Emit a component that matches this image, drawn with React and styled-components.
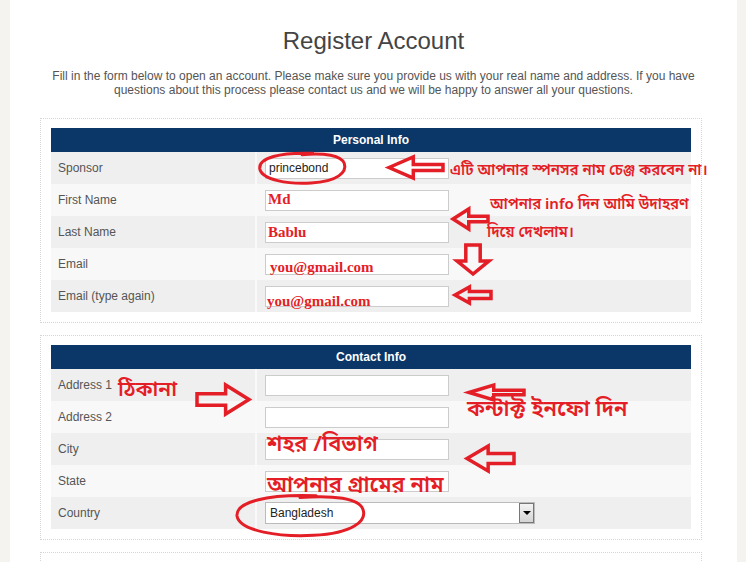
import React from 'react';
import styled, { createGlobalStyle } from 'styled-components';

const GlobalStyle = createGlobalStyle`
    html, body {
        margin: 0;
        padding: 0;
        background: #f4f3f0;
    }
`;

const RED = '#e41e26';
const BN = `"Noto Sans Bengali", "Lohit Bengali", "Noto Serif Bengali", "Vrinda", "Noto Sans", sans-serif`;

const Root = styled.div`
    position: relative;
    width: 746px;
    height: 562px;
    overflow: hidden;
    padding: 0 9px 0 10px;
    box-sizing: border-box;
    font-family: 'Liberation Sans', Arial, sans-serif;
`;

const Sheet = styled.div`
    background: #fff;
    height: 100%;
    padding-top: 26px;
    box-sizing: border-box;
`;

const Title = styled.h1`
    margin: 0;
    font-size: 24px;
    font-weight: normal;
    color: #444;
    text-align: center;
    line-height: 30px;
`;

const Intro = styled.p`
    width: 672px;
    margin: 13px auto 21px;
    font-size: 12px;
    line-height: 14px;
    color: #555;
    text-align: center;
`;

const Box = styled.div`
    margin: 0 35px 12px 30px;
    border: 1px dotted #d6d6d6;
    padding: 9px 10px 10px;
`;

const BoxHead = styled.div`
    height: 24px;
    line-height: 24px;
    background: #0b3768;
    color: #fff;
    font-weight: bold;
    font-size: 12px;
    text-align: center;
`;

const Row = styled.div`
    display: flex;
    height: 32px;
    background: ${(p) => (p.$odd ? '#f8f8f8' : '#efefef')};
`;

const Label = styled.div`
    width: 197px;
    padding-left: 7px;
    border-right: 2px solid #f9f9f9;
    display: flex;
    align-items: center;
    font-size: 12px;
    color: #555;
`;

const Cell = styled.div`
    flex: 1;
    display: flex;
    align-items: center;
    padding-left: 8px;
`;

const Input = styled.div`
    width: 184px;
    height: 21px;
    box-sizing: border-box;
    border: 1px solid #ccc;
    background: #fff;
    font-size: 12px;
    color: #222;
    line-height: 19px;
    padding-left: 3px;
`;

const Select = styled.div`
    width: 270px;
    height: 22px;
    box-sizing: border-box;
    border: 1px solid #bbb;
    background: #fff;
    display: flex;
    align-items: center;
    font-size: 12px;
    color: #222;
    padding-left: 4px;
`;

const SelectText = styled.span`
    flex: 1;
`;

const DropBtn = styled.div`
    width: 15px;
    height: 20px;
    box-sizing: border-box;
    border: 1px solid #777;
    background: linear-gradient(#f4f4f4, #d4d4d4);
    display: flex;
    align-items: center;
    justify-content: center;
    &::after {
        content: '';
        border-left: 4px solid transparent;
        border-right: 4px solid transparent;
        border-top: 4px solid #000;
    }
`;

const Note = styled.div`
    position: absolute;
    left: ${(p) => p.$x}px;
    top: ${(p) => p.$y}px;
    font-family: ${BN};
    font-size: ${(p) => p.$size || 15}px;
    font-weight: 600;
    color: ${RED};
    white-space: nowrap;
    line-height: 1;
`;

const Value = styled.div`
    position: absolute;
    left: ${(p) => p.$x}px;
    top: ${(p) => p.$y}px;
    font-family: 'Liberation Serif', 'Times New Roman', serif;
    font-weight: bold;
    font-size: 15px;
    color: ${RED};
    line-height: 1;
    white-space: nowrap;
`;

const Mark = styled.svg`
    position: absolute;
    left: ${(p) => p.$x}px;
    top: ${(p) => p.$y}px;
    overflow: visible;
`;

const Arrow = ({ x, y, w, h, dir = 'left', sw = 3.5, head = 0.45, shaft = 0.28 }) => {
    let pts;
    if (dir === 'left' || dir === 'right') {
        const hw = w * head;
        const t = h * (0.5 - shaft / 2);
        const b = h * (0.5 + shaft / 2);
        pts = [
            [0, h / 2],
            [hw, 0],
            [hw, t],
            [w, t],
            [w, b],
            [hw, b],
            [hw, h],
        ];
        if (dir === 'right') pts = pts.map(([px, py]) => [w - px, py]);
    } else {
        const hh = h * head;
        const l = w * (0.5 - shaft / 2);
        const r = w * (0.5 + shaft / 2);
        pts = [
            [w / 2, h],
            [0, h - hh],
            [l, h - hh],
            [l, 0],
            [r, 0],
            [r, h - hh],
            [w, h - hh],
        ];
    }
    return (
        <Mark $x={x} $y={y} width={w} height={h}>
            <polygon
                points={pts.map((p) => p.join(',')).join(' ')}
                fill="none"
                stroke={RED}
                strokeWidth={sw}
                strokeLinejoin="miter"
            />
        </Mark>
    );
};

const Loop = ({ x, y, w, h }) => (
    <Mark $x={x} $y={y} width={w} height={h}>
        <path
            d={`M ${w * 0.62} ${h * 0.04}
                C ${w * 0.25} ${h * 0.0}, ${w * 0.02} ${h * 0.18}, ${w * 0.03} ${h * 0.5}
                C ${w * 0.05} ${h * 0.85}, ${w * 0.35} ${h * 0.98}, ${w * 0.6} ${h * 0.94}
                C ${w * 0.9} ${h * 0.9}, ${w * 1.0} ${h * 0.6}, ${w * 0.97} ${h * 0.35}
                C ${w * 0.94} ${h * 0.1}, ${w * 0.75} ${h * 0.02}, ${w * 0.5} ${h * 0.08}`}
            fill="none"
            stroke={RED}
            strokeWidth="3"
            strokeLinecap="round"
        />
    </Mark>
);

const personal = [
    { label: 'Sponsor', value: 'princebond' },
    { label: 'First Name' },
    { label: 'Last Name' },
    { label: 'Email' },
    { label: 'Email (type again)' },
];

const contact = ['Address 1', 'Address 2', 'City', 'State'];

const App = () => (
    <>
        <GlobalStyle />
        <Root>
            <Sheet>
                <Title>Register Account</Title>
                <Intro>
                    Fill in the form below to open an account. Please make sure you provide us with your real name and
                    address. If you have questions about this process please contact us and we will be happy to answer
                    all your questions.
                </Intro>

                <Box>
                    <BoxHead>Personal Info</BoxHead>
                    {personal.map((f, i) => (
                        <Row key={f.label} $odd={i % 2 === 1}>
                            <Label>{f.label}</Label>
                            <Cell>
                                <Input>{f.value}</Input>
                            </Cell>
                        </Row>
                    ))}
                </Box>

                <Box>
                    <BoxHead>Contact Info</BoxHead>
                    {contact.map((l, i) => (
                        <Row key={l} $odd={i % 2 === 1}>
                            <Label>{l}</Label>
                            <Cell>
                                <Input />
                            </Cell>
                        </Row>
                    ))}
                    <Row>
                        <Label>Country</Label>
                        <Cell>
                            <Select>
                                <SelectText>Bangladesh</SelectText>
                                <DropBtn />
                            </Select>
                        </Cell>
                    </Row>
                </Box>

                <Box />
            </Sheet>

            {/* hand-drawn notes over the form */}
            <Loop x={257} y={152} w={90} h={33} />
            <Arrow x={389} y={157} w={54} h={21} />
            <Note $x={450} $y={164} $size={15}>এটি আপনার স্পনসর নাম চেঞ্জ করবেন না।</Note>

            <Value $x={268} $y={192}>Md</Value>
            <Value $x={268} $y={225}>Bablu</Value>
            <Value $x={270} $y={260}>you@gmail.com</Value>
            <Value $x={267} $y={294}>you@gmail.com</Value>

            <Note $x={490} $y={198} $size={15}>আপনার info দিন আমি উদাহরণ</Note>
            <Arrow x={453} y={209} w={35} h={20} />
            <Note $x={487} $y={226} $size={15}>দিয়ে দেখলাম।</Note>
            <Arrow x={457} y={245} w={32} h={29} dir="down" shaft={0.45} />
            <Arrow x={455} y={287} w={36} h={16} head={0.4} shaft={0.45} />

            <Note $x={118} $y={381} $size={21}>ঠিকানা</Note>
            <Arrow x={197} y={385} w={52} h={29} dir="right" shaft={0.4} />
            <Arrow x={469} y={385} w={55} h={15} head={0.45} shaft={0.3} />
            <Note $x={467} $y={400} $size={22}>কন্টাক্ট ইনফো দিন</Note>
            <Note $x={267} $y={435} $size={22}>শহর /বিভাগ</Note>
            <Arrow x={467} y={446} w={47} h={25} shaft={0.4} />
            <Note $x={267} $y={476} $size={22}>আপনার গ্রামের নাম</Note>
            <Loop x={233} y={494} w={134} h={44} />
        </Root>
    </>
);

export default App;
